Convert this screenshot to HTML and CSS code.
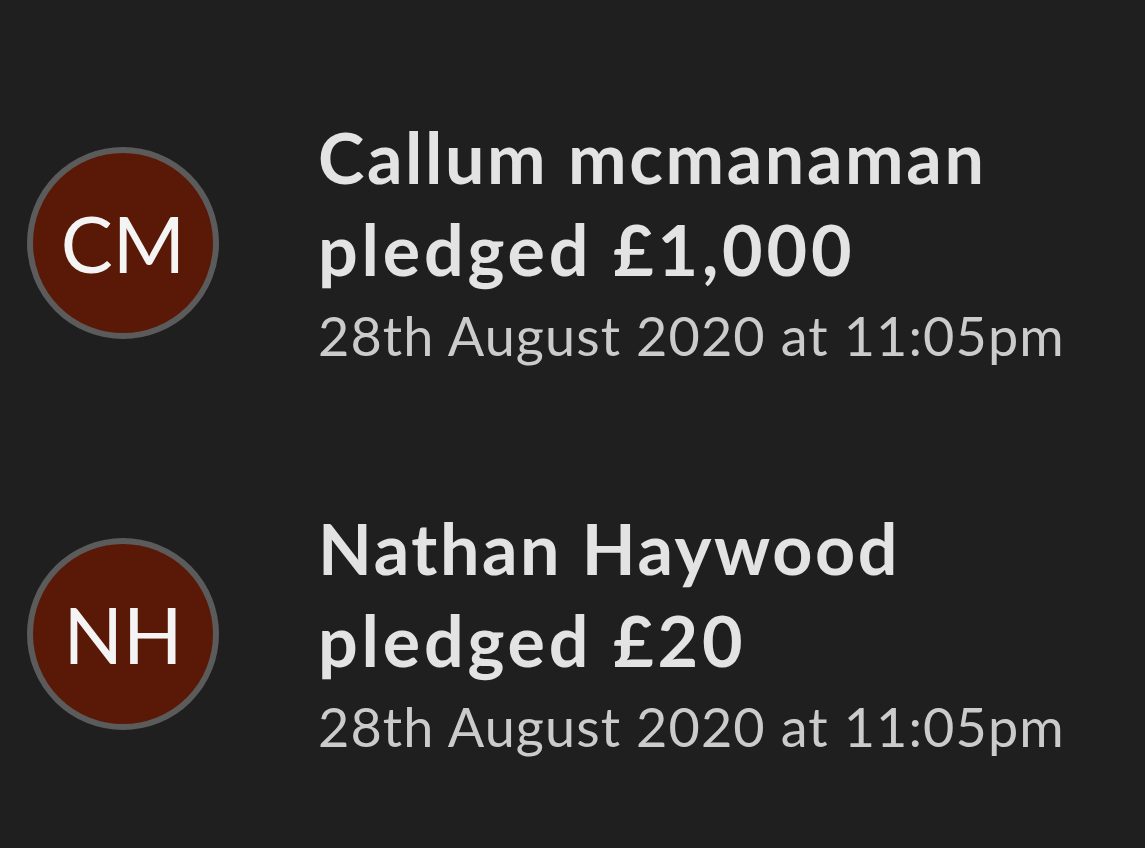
FILE: index.html
```html
<!DOCTYPE html>
<html>
<head>
<meta charset="utf-8">
<link rel="stylesheet" href="styles.css">
</head>
<body>
<div class="list">
  <div class="row">
    <div class="avatar">CM</div>
    <div class="info">
      <div class="title">Callum mcmanaman<br><span class="pledge">pledged £1,000</span></div>
      <div class="date">28th August 2020 at 11:05pm</div>
    </div>
  </div>
  <div class="row">
    <div class="avatar">NH</div>
    <div class="info">
      <div class="title">Nathan Haywood<br><span class="pledge">pledged £20</span></div>
      <div class="date">28th August 2020 at 11:05pm</div>
    </div>
  </div>
</div>
</body>
</html>
```
FILE: styles.css
```css
html, body {
  margin: 0;
  padding: 0;
  background: #1f1f1f;
  width: 1145px;
  height: 848px;
  overflow: hidden;
  font-family: Lato, "Noto Sans", sans-serif;
}
.list {
  display: flex;
  flex-direction: column;
  gap: 123px;
  padding-top: 111px;
}
.row {
  display: flex;
  align-items: flex-start;
}
.avatar {
  width: 180px;
  height: 180px;
  margin-top: 36px;
  border-radius: 50%;
  border: 6px solid #5b5b5b;
  background: #5a1906;
  color: #f4f4f4;
  font-size: 78px;
  display: flex;
  align-items: center;
  justify-content: center;
  margin-left: 27px;
  flex-shrink: 0;
}
.info {
  margin-left: 99px;
}
.title {
  color: #e3e3e3;
  font-weight: 700;
  font-size: 70px;
  line-height: 92px;
  letter-spacing: 2.6px;
}
.pledge {
  letter-spacing: 3.8px;
}
.date {
  color: #cbcbcb;
  font-size: 54px;
  line-height: 70px;
  margin-top: 6px;
  margin-bottom: 8px;
  letter-spacing: 1.1px;
}
```
